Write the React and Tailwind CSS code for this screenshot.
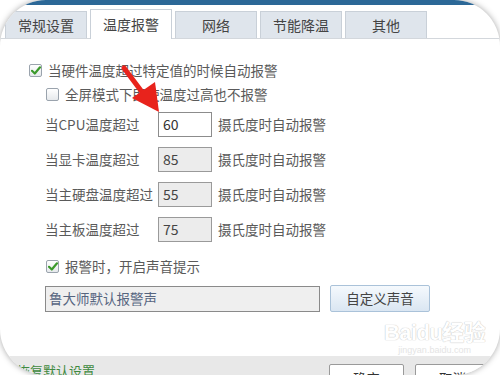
import React from "react";

const tabs = ["常规设置", "温度报警", "网络", "节能降温", "其他"];

const temps = [
  { label: "当CPU温度超过", value: "60", active: true },
  { label: "当显卡温度超过", value: "85" },
  { label: "当主硬盘温度超过", value: "55" },
  { label: "当主板温度超过", value: "75" },
];

const CheckBox = ({ checked }) => (
  <span className="w-[13px] h-[13px] border border-[#9aa3ad] rounded-[2px] bg-gradient-to-b from-white to-[#e6e9ec] flex items-center justify-center shrink-0">
    {checked && (
      <svg width="10" height="9" viewBox="0 0 10 9">
        <path d="M1 4.8 L3.8 7.5 L9 1.3" fill="none" stroke="#3c9a2c" strokeWidth="2.2" strokeLinecap="round" strokeLinejoin="round" />
      </svg>
    )}
  </span>
);

const App = () => {
  return (
    <div
      className="w-[500px] h-[375px] bg-white overflow-hidden relative"
      style={{ fontFamily: '"Noto Sans CJK SC", "Noto Sans", sans-serif' }}
    >
      <div className="h-full rounded-[46px] overflow-hidden bg-white shadow-[0_0_6px_rgba(0,0,0,0.35)] flex flex-col">
        <div className="h-[5px] bg-[#2c6897] shrink-0" />

        {/* tabs */}
        <div className="h-[34px] flex items-end gap-[3px] pl-[5px] border-b border-[#d3d7dc] shrink-0">
          {tabs.map((t, i) => (
            <div
              key={t}
              className={
                i === 1
                  ? "w-[82px] h-[30px] bg-white border border-[#c9d0d8] border-b-0 flex items-center justify-center text-[14px] text-[#444] -mb-[1px]"
                  : "w-[82px] h-[27px] bg-[#dfe5ec] border border-[#c9d0d8] border-b-0 flex items-center justify-center text-[14px] text-[#444]"
              }
            >
              {t}
            </div>
          ))}
        </div>

        {/* content */}
        <div className="flex-1 flex flex-col pt-[21px] text-[13.5px] text-[#5a5a5a]">
          <div className="h-[20px] flex items-center gap-[6px] pl-[29px]">
            <CheckBox checked />
            <span>当硬件温度超过特定值的时候自动报警</span>
          </div>
          <div className="h-[20px] flex items-center gap-[6px] pl-[46px] mt-[4px]">
            <CheckBox />
            <span>全屏模式下即使温度过高也不报警</span>
          </div>

          <div className="flex flex-col gap-[10px] pl-[45px] mt-[8px]">
            {temps.map((r) => (
              <div key={r.label} className="h-[25px] flex items-center">
                <span className="w-[113px]">{r.label}</span>
                <span
                  className={
                    r.active
                      ? "w-[54px] h-[25px] border border-[#8c8c8c] bg-white text-[#333] text-[14px] pl-[4px] flex items-center"
                      : "w-[54px] h-[25px] border border-[#9a9a9a] bg-[#ececec] text-[#444] text-[14px] pl-[4px] flex items-center"
                  }
                >
                  {r.value}
                </span>
                <span className="ml-[6px]">摄氏度时自动报警</span>
              </div>
            ))}
          </div>

          <div className="h-[20px] flex items-center gap-[6px] pl-[46px] mt-[14px]">
            <CheckBox checked />
            <span>报警时，开启声音提示</span>
          </div>

          <div className="flex items-center pl-[45px] mt-[9px]">
            <div className="w-[275px] h-[26px] border border-[#8a8a8a] bg-[#efefef] text-[#56657f] pl-[3px] flex items-center">
              鲁大师默认报警声
            </div>
            <button className="ml-[10px] w-[100px] h-[27px] border border-[#aac2d9] rounded-[2px] bg-gradient-to-b from-[#f5f9fd] to-[#dae6f2] text-[#444] text-[13.5px]">
              自定义声音
            </button>
          </div>
        </div>

        {/* footer */}
        <div className="h-[19px] bg-[#e8e8e8] shrink-0 flex items-start pt-[8px] pl-[17px] relative">
          <span className="text-[13px] text-[#3f8a3f] leading-none">恢复默认设置</span>
          <div className="ml-auto mr-[10px] flex gap-[11px]">
            <div className="w-[75px] h-[20px] border border-[#9a9a9a] bg-white text-[13.5px] text-[#333] flex justify-center pt-[3px] rounded-[2px]">确定</div>
            <div className="w-[75px] h-[20px] border border-[#9a9a9a] bg-white text-[13.5px] text-[#333] flex justify-center pt-[3px] rounded-[2px]">取消</div>
          </div>
        </div>
      </div>

      {/* red arrow overlay */}
      <svg className="absolute left-[115px] top-[60px]" width="50" height="56" viewBox="0 0 50 56">
        <path d="M9 8 L30 36" stroke="#e8231c" strokeWidth="5" strokeLinecap="round" />
        <polygon points="17,38 40,22 44,52" fill="#e8231c" />
      </svg>

      {/* watermark */}
      <div
        className="absolute left-[384px] top-[322px] flex flex-col items-center text-white leading-none"
        style={{ textShadow: "0 0 1px #c8c8c8, 0 0 1px #c8c8c8" }}
      >
        <span className="text-[22px] font-bold tracking-tight" style={{ fontFamily: '"Liberation Sans", "Noto Sans CJK SC", sans-serif' }}>
          Baidu经验
        </span>
        <span className="text-[9px] mt-[2px] text-[#e4e4e4]" style={{ fontFamily: '"Liberation Sans", sans-serif', textShadow: "none" }}>
          jingyan.baidu.com
        </span>
      </div>
    </div>
  );
};

export default App;
